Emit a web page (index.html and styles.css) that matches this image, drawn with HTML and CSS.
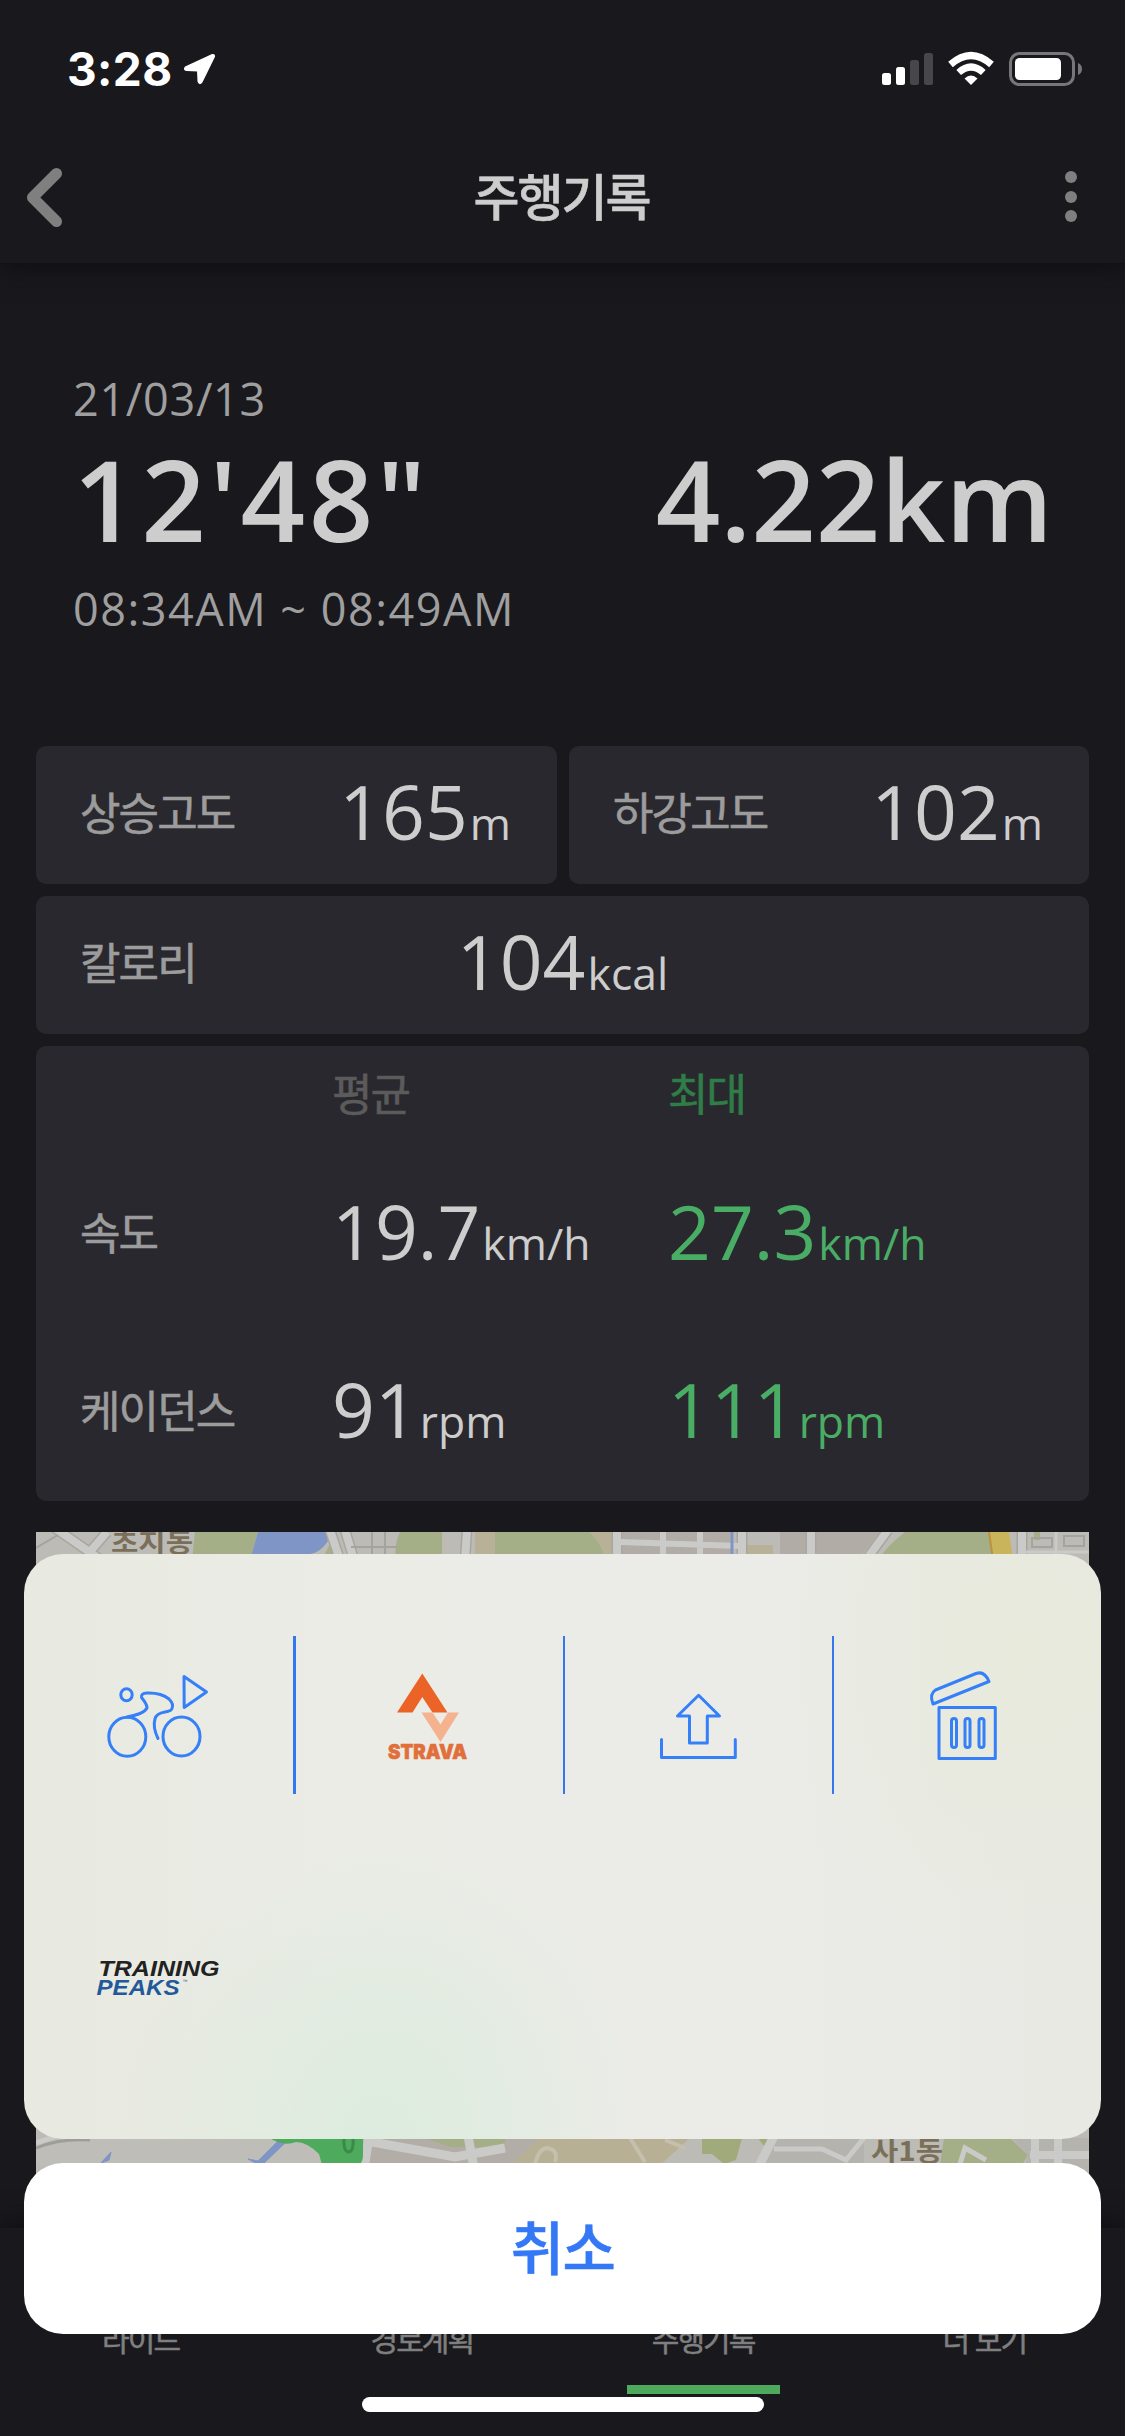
FILE: index.html
```
<!DOCTYPE html>
<html lang="ko">
<head>
<meta charset="utf-8">
<title>주행기록</title>
<link rel="stylesheet" href="styles.css">
</head>
<body>
<div class="screen">
  <header class="top">
    <div class="status">
      <div class="clock"><span class="clock-text">3:28</span>
        <svg class="arrow" viewBox="182 53 32 32"><path d="M211.500 55 L184.500 67.500 Q183 69.500 185.500 70 L197 70.500 L197.500 81.500 Q198.500 84.500 200.500 82 L213 56.500 Q213.200 54.500 211.500 55Z" fill="#fff" stroke="#fff" stroke-width="2" stroke-linejoin="round"/></svg>
      </div>
      <svg class="signals" viewBox="880 50 204 38">
        <g fill="#fff"><rect x="882" y="73" width="9" height="12" rx="2.500"/><rect x="896" y="67" width="9" height="18" rx="2.500"/></g>
        <g fill="#47464b"><rect x="910" y="60" width="9" height="25" rx="2.500"/><rect x="924" y="53" width="9" height="32" rx="2.500"/></g>
        <g fill="none" stroke="#fff" stroke-width="7">
          <path d="M950.500 64.500 Q971 46.500 991.500 64.500"/><path d="M958.700 72.500 Q971 61.500 983.300 72.500"/>
        </g>
        <path d="M964.500 78.500 Q971 72.500 977.500 78.500 L971 85Z" fill="#fff"/>
        <rect x="1010.500" y="53.500" width="63" height="31" rx="9" fill="none" stroke="#77767a" stroke-width="3"/>
        <rect x="1015" y="58" width="46" height="22" rx="4.500" fill="#fff"/>
        <path d="M1078 63 Q1082 64.500 1082 69 Q1082 73.500 1078 75Z" fill="#77767a"/>
      </svg>
    </div>
    <div class="nav">
      <svg class="back" viewBox="26 168 40 62"><path d="M57.500 174.500 L33.500 198.500 L57.500 222.500" fill="none" stroke="#7f7f7f" stroke-width="11" stroke-linecap="round" stroke-linejoin="round"/></svg>
      <h1 class="title">주행기록</h1>
      <svg class="more" viewBox="1062 168 18 60"><g fill="#7f7f7f"><circle cx="1071" cy="177" r="6"/><circle cx="1071" cy="197" r="6"/><circle cx="1071" cy="216" r="6"/></g></svg>
    </div>
  </header>

  <main class="content">
    <section class="summary">
      <div class="small">21/03/13</div>
      <div class="totals"><span class="duration">12'48"</span><span class="distance">4.22km</span></div>
      <div class="small range">08:34AM ~ 08:49AM</div>
    </section>

    <section class="cards">
      <div class="card pair"><span class="label">상승고도</span><span class="value">165<small>m</small></span></div>
      <div class="card pair"><span class="label">하강고도</span><span class="value">102<small>m</small></span></div>
      <div class="card calories"><span class="label">칼로리</span><span class="value">104<small>kcal</small></span></div>
      <div class="card table">
        <span></span><span class="label head dim">평균</span><span class="label head green-dim">최대</span>
        <span class="label">속도</span><span class="value">19.7<small>km/h</small></span><span class="value green">27.3<small>km/h</small></span>
        <span class="label">케이던스</span><span class="value">91<small>rpm</small></span><span class="value green">111<small>rpm</small></span>
      </div>
    </section>

    <svg class="map" viewBox="36 1532 1053 696">
      <rect x="36" y="1532" width="1053" height="696" fill="#bdbbb5"/>
      <!-- northern edge -->
      <g fill="#a4af87">
        <path d="M195 1532 H258 L250 1560 H192Z M400 1532 H442 V1560 H396 Q394 1544 400 1532Z M495 1532 H590 Q602 1544 606 1560 H495Z M905 1532 H990 L995 1560 H878 Q888 1545 905 1532Z"/>
        <path d="M322 1560 L330 1544 L334 1560Z M1034 1532 h6 v8 h-6Z"/>
      </g>
      <path d="M258 1532 H326 L328 1541 Q320 1553 310 1554 V1560 H250Z" fill="#7e95c6"/>
      <path d="M475 1532 h20 v28 h-20Z M590 1532 h24 v28 h-8 Q602 1544 590 1532Z M745 1545 h28 v15 h-28Z" fill="#b8b097"/>
      <path d="M621 1532 h110 v28 h-110Z M780 1532 h100 l-22 28 h-78Z" fill="#b1ada6"/>
      <g fill="none" stroke="#a9a69f" stroke-width="11">
        <path d="M52 1526 L101 1560 M107 1532 L88 1554 M330 1530 L340 1560 M345 1530 L354 1560 M467 1530 L465 1560 M617 1530 V1560 M742 1530 V1560 M811 1530 V1560 M888 1530 L866 1560 M1022 1530 V1560"/>
      </g>
      <g fill="none" stroke="#cacac9" stroke-width="8">
        <path d="M52 1526 L101 1560 M107 1532 L88 1554 M330 1530 L340 1560 M345 1530 L354 1560 M467 1530 L465 1560 M617 1530 V1560 M742 1530 V1560 M811 1530 V1560 M888 1530 L866 1560 M1022 1530 V1560"/>
        <path d="M620 1542 L740 1546 M663 1530 V1556 M700 1530 V1560" stroke-width="6"/>
        <path d="M1024 1552 H1089 M1056 1532 V1560" stroke-width="3"/>
      </g>
      <path d="M36 1548 L58 1535 M351 1547 H398 M372 1532 V1556 M385 1532 V1556 M1032 1538 h20 v9 h-20Z M1064 1536 h20 v10 h-20Z" fill="none" stroke="#a5a39d" stroke-width="2"/>
      <path d="M732 1532 V1560" stroke="#7e95c6" stroke-width="3"/>
      <path d="M989 1532 h20 l4 28 h-20Z" fill="#c9b45c"/><path d="M989 1532 l4 28" stroke="#bd9142" stroke-width="2"/>
      <text class="place" x="111" y="1552" font-size="26" textLength="82" lengthAdjust="spacingAndGlyphs">초지동</text>
      <!-- southern edge -->
      <path d="M36 2146 L60 2138 H320 L350 2165 H36Z" fill="#bebdb7"/>
      <path d="M36 2148 Q60 2138 90 2140" fill="none" stroke="#9f9d97" stroke-width="3"/>
      <path d="M36 2143 L60 2135" stroke="#cacac9" stroke-width="5"/>
      <path d="M369 2138 H505 V2165 H369Z" fill="#b2ada7"/>
      <path d="M380 2138 H690 L660 2165 H500Z" fill="#b8b095"/>
      <path d="M370 2138 H540 L510 2165 H364Z" fill="#b2ada7"/>
      <path d="M425 2138 H505 V2147 H450Z M944 2138 H1010 L1028 2155 L1022 2165 H940Z" fill="#a4af87"/>
      <path d="M702 2138 H742 L736 2160 L724 2164 L712 2154 L702 2154Z M758 2138 h14 l-8 8Z" fill="#a0aa7b"/>
      <path d="M778 2138 H864 V2165 H760Z M1012 2138 H1089 V2210 H1012 L1028 2155Z" fill="#b5b3ae"/>
      <path d="M101 2163 L111 2152 L109 2160Z M248 2159 L258 2161 L277 2142 H286 L261 2166Z" fill="#7e95c6" stroke="#7e95c6"/>
      <g fill="none" stroke="#cacac9" stroke-width="9">
        <path d="M369 2138 L364 2168 M372 2142 L455 2157 L505 2148 M468 2136 L474 2168" />
        <path d="M774 2136 L758 2168" /><path d="M774 2149 H822 L846 2160 L864 2138" stroke-width="5"/>
        <path d="M1035 2136 V2165 M1058 2136 V2165 M1030 2155 H1089" stroke-width="8"/>
        <path d="M960 2164 L965 2148 L986 2160" stroke-width="5"/>
      </g>
      <path d="M535 2165 q3 -16 12 -17 q12 2 8 14 M630 2138 l15 24 M665 2140 l20 8" fill="none" stroke="#c5bfae" stroke-width="4"/>
      <path d="M268 2137 H363 V2155 Q363 2162 359 2165 H322 L319 2154 Q307 2142 296 2142 Q283 2147 268 2137Z" fill="#4eaa5d"/>
      <path d="M344 2137 Q343 2152 349 2152 Q354 2151 353 2137" fill="none" stroke="#3a8a48" stroke-width="3"/>
      <text class="place" x="871" y="2161" font-size="27" textLength="72" lengthAdjust="spacingAndGlyphs">사1동</text>
    </svg>
  </main>

  <nav class="tabs">
    <div class="tab">라이드</div>
    <div class="tab">경로계획</div>
    <div class="tab active">주행기록</div>
    <div class="tab">더 보기</div>
  </nav>

  <div class="overlay">
    <div class="sheet">
      <div class="actions">
        <div class="action first">
          <svg class="icon" viewBox="24 1636 269 158">
            <g fill="none" stroke="#3580f8" stroke-width="3" stroke-linecap="round" stroke-linejoin="round">
              <ellipse cx="127.300" cy="1736.700" rx="18.500" ry="19.500"/><ellipse cx="181.500" cy="1736.500" rx="18.500" ry="19.500"/>
              <ellipse cx="126.500" cy="1694.700" rx="5.700" ry="6"/>
              <path d="M127 1717 Q144 1714 147 1708 Q147 1704 141.500 1697.500 Q140.500 1693.500 147 1693 Q161 1692.500 169 1699 Q174 1704 172 1708.500 Q171.500 1711 165 1712 Q156 1713.500 155 1719 Q152.500 1727 158 1738.500"/>
              <path d="M184 1676.500 L206.500 1692 L184.200 1707.500Z"/>
            </g>
          </svg>
        </div>
        <div class="action">
          <svg class="icon" viewBox="296 1636 267 158">
            <path d="M422.300 1673.500 L447.500 1712.500 H432.500 L422.300 1697 L412.500 1712.500 H397Z" fill="#ec6327"/>
            <path d="M421.500 1712.500 H432.500 L440.500 1724.500 L448 1712.500 H459 L440.500 1742Z" fill="#f4b28f"/>
            <text class="strava" x="388" y="1758.500" textLength="79" lengthAdjust="spacingAndGlyphs">STRAVA</text>
          </svg>
        </div>
        <div class="action">
          <svg class="icon" viewBox="565 1636 267 158">
            <g fill="none" stroke="#3580f8" stroke-width="3" stroke-linejoin="round" stroke-linecap="round">
              <path d="M698.600 1695.300 L719.500 1716 H707.300 V1743 H689.500 V1716 H677.500Z"/>
              <path d="M661.500 1739.500 V1757.500 H735.300 V1739.500"/>
            </g>
          </svg>
        </div>
        <div class="action last">
          <svg class="icon" viewBox="835 1636 267 158">
            <g fill="none" stroke="#3580f8" stroke-width="3" stroke-linejoin="round">
              <rect x="940" y="1707.500" width="56.300" height="51"/>
              <rect x="952.500" y="1718.500" width="5" height="29" rx="2.500"/><rect x="966" y="1718.500" width="5" height="29" rx="2.500"/><rect x="980" y="1718.500" width="5" height="29" rx="2.500"/>
              <path d="M934 1704 L990 1681.500 Q985.500 1670.500 977 1673.500 L936.500 1690 Q930 1694 934 1704Z"/>
            </g>
          </svg>
        </div>
        <div class="action last">
          <svg class="icon" viewBox="24 1899 269 158">
            <text class="peaks" x="97" y="1975.500" fill="#222" textLength="121" lengthAdjust="spacingAndGlyphs">TRAINING</text>
            <text class="peaks" x="95" y="1995" fill="#21599b" textLength="83" lengthAdjust="spacingAndGlyphs">PEAKS</text>
            <text class="mark" x="181" y="1983" fill="#21599b">™</text>
          </svg>
        </div>
      </div>
    </div>
    <button class="cancel">취소</button>
    <div class="home"></div>
  </div>
</div>
</body>
</html>
```
FILE: styles.css
```
* { box-sizing: border-box; }
body { margin: 0; background: #19181d; }
svg { display: block; }
.screen {
  position: relative;
  display: flex;
  flex-direction: column;
  width: 1125px;
  height: 2436px;
  overflow: hidden;
  background: #19181d;
  color: #cdcdcd;
  font-family: "Open Sans", "Noto Sans CJK KR", sans-serif;
}

.top { height: 264px; box-shadow: 0 3px 24px #0e0e0f; border-bottom: 1px solid #121213; flex: none; }
.status { display: flex; justify-content: space-between; align-items: center; height: 138px; padding: 0 41px 0 67px; }
.clock { display: flex; align-items: center; gap: 10px; color: #fff; }
.clock-text { font: 700 46px/60px Inter, sans-serif; letter-spacing: 0.4px; }
.arrow { width: 32px; height: 32px; }
.signals { width: 204px; height: 38px; }
.nav { display: flex; align-items: center; justify-content: space-between; height: 120px; padding: 0 45px 0 25px; }
.back { width: 40px; height: 62px; }
.more { width: 18px; height: 60px; }
.title { margin: 0; padding: 0 4px 7px 0; font: 500 50px/113px "Noto Sans CJK KR", sans-serif; letter-spacing: -2px; -webkit-text-stroke: 0.6px #cdcdcd; }

.content { flex: none; height: 1964px; padding: 0 36px; }
.summary { height: 482px; padding: 108px 42px 0 37px; }
.small { color: #9f9f9f; font-size: 45px; line-height: 54px; letter-spacing: 0.7px; }
.totals { display: flex; justify-content: space-between; margin-right: -6px; font-size: 113px; line-height: 145px; font-weight: 600; }
.duration { letter-spacing: 3.6px; }
.range { line-height: 76px; letter-spacing: 1.5px; }

.cards { display: grid; grid-template-columns: 521px 520px; gap: 12px; }
.card { background: #29282e; border-radius: 10px; line-height: 130px; }
.pair { display: flex; justify-content: space-between; height: 138px; padding: 0 46px 0 44px; }
.label { color: #9c9c9c; font-family: "Noto Sans CJK KR", sans-serif; font-size: 44px; letter-spacing: -1.9px; white-space: nowrap; -webkit-text-stroke: 0.6px; }
.value { font-size: 75px; white-space: nowrap; }
.value small { margin-left: 2px; font-size: 44.5px; }
.calories { grid-column: 1 / -1; display: grid; grid-template-columns: 1fr auto 1fr; height: 138px; padding: 0 44px; }
.table { grid-column: 1 / -1; display: grid; grid-template-columns: 252px 336px 1fr; grid-template-rows: 120px 178px 157px; height: 455px; padding-left: 44px; }
.head { line-height: 92px; }
.dim { color: #5b5b5b; }
.green-dim { color: #2f7d47; }
.green { color: #4aad65; }
.map { width: 1053px; height: 696px; margin-top: 31px; }
.place { fill: #7a705a; font-family: "Noto Sans CJK KR", sans-serif; font-weight: 700; }

.tabs { position: relative; display: grid; grid-template-columns: repeat(4, 1fr); height: 208px; background: #19181d; box-shadow: 0 -3px 24px #0e0e0f; }
.tab { height: 166px; padding-top: 90px; text-align: center; color: #7f7f7f; font: 400 30px/40px "Noto Sans CJK KR", sans-serif; letter-spacing: -1.9px; -webkit-text-stroke: 0.5px; }
.active { width: 153px; justify-self: center; border-bottom: 9px solid #4ea95c; }

.overlay { position: absolute; inset: 1554px 24px 0; display: flex; flex-direction: column; }
.sheet {
  height: 585px;
  padding: 82px 0;
  border-radius: 39px;
  background:
    radial-gradient(ellipse 260px 300px at 355px 585px, #dcecdeff, #dcecde80 50%, #dcecde00),
    radial-gradient(ellipse 260px 330px at 1000px 100px, #e8eadcff, #e8eadc00),
    linear-gradient(90deg, #e8e9e0, #ebece6 30%, #ebece8 70%, #e8e9e3);
}
.actions { display: grid; grid-template-columns: 272px 269px 269px 267px; row-gap: 105px; }
.action { height: 158px; border-right: 2px solid #3478f0; }
.first { border-right-width: 3px; }
.last { border-right: 0; }
.icon { width: 100%; height: 158px; }
.strava { fill: #e16f3b; font: 900 20px Inter, sans-serif; stroke: #e16f3b; stroke-width: 0.6px; }
.peaks { font: italic 700 21.5px "Liberation Sans", sans-serif; stroke: currentColor; stroke-width: 0; }
.mark { font: 5px "Liberation Sans", sans-serif; }
.cancel { height: 171px; margin-top: 24px; padding: 0 0 8px; border: 0; border-radius: 39px; background: #fff; color: #3478f6; font: 500 58px/160px "Noto Sans CJK KR", sans-serif; letter-spacing: -1.5px; -webkit-text-stroke: 0.6px #3478f6; }
.home { align-self: center; width: 402px; height: 15px; margin-top: 63px; border-radius: 8px; background: #fff; }
```
